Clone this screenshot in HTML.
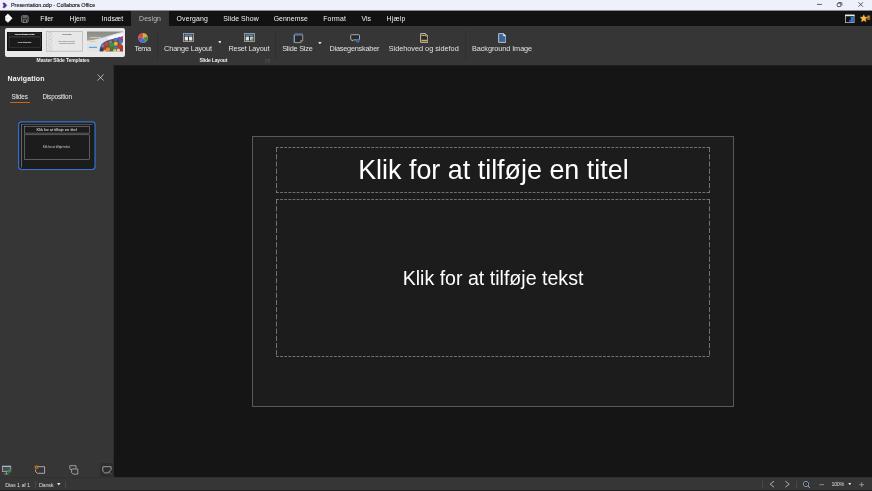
<!DOCTYPE html>
<html lang="da">
<head>
<meta charset="utf-8">
<title>Presentation.odp - Collabora Office</title>
<style>
*{box-sizing:border-box;margin:0;padding:0}
html,body{width:872px;height:491px;overflow:hidden;background:#151515;font-family:"Liberation Sans","DejaVu Sans",sans-serif;color:#e8e8e8}
.abs{position:absolute}
.t{position:absolute;white-space:nowrap;line-height:1em}
#titlebar{left:0;top:0;width:872px;height:11px;background:linear-gradient(180deg,#eef1fa 0,#eef1fa 10px,#8a8c92 10px,#8a8c92 11px)}
#menubar{left:0;top:11px;width:872px;height:15px;background:#121212}
#tabact{left:131px;top:11px;width:38px;height:15px;background:#363636}
#ribbon{left:0;top:26px;width:872px;height:39px;background:#363636}
.sep{position:absolute;top:5px;width:1px;height:29px;background:#2f2f2f}
#sidebar{left:0;top:65px;width:114px;height:412px;background:linear-gradient(90deg,#363636 0,#363636 113px,#2e2e2e 113px)}
#wsline{left:114px;top:65px;width:758px;height:1px;background:#1f1f1f}
#status{left:0;top:477px;width:872px;height:14px;background:linear-gradient(180deg,#313131 0,#313131 1px,#363636 1px,#363636 13px,#212121 13px)}
#slide{left:252px;top:136px;width:482px;height:271px;background:#1c1c1c;border:1px solid #595959}
.ph{position:absolute;display:flex;align-items:center;justify-content:center;color:#fff;white-space:nowrap;will-change:transform}
.vs{position:absolute;top:4px;width:1px;height:7px;background:#484848}
</style>
</head>
<body>
<div id="titlebar" class="abs">
  <svg class="abs" style="left:2px;top:1.5px" width="6" height="7" viewBox="2 1.5 6 7"><path d="M2.9 2.6 L4.6 2.4 L6.8 4.9 L4.6 7.3 L2.9 7.1 L3.9 4.9 Z" fill="#5b2488" stroke="#5b2488" stroke-width="0.5" stroke-linejoin="round"/></svg>
  <svg class="abs" style="left:810px;top:0" width="62" height="11" viewBox="0 0 62 11">
    <path d="M7 4.4 H12" stroke="#222" stroke-width="0.7" fill="none"/>
    <rect x="27.2" y="3.2" width="3.6" height="3.4" rx="0.8" stroke="#222" stroke-width="0.7" fill="none"/>
    <path d="M28.4 2.5 H31 Q31.9 2.5 31.9 3.4 V5.6" stroke="#222" stroke-width="0.7" fill="none"/>
    <path d="M48.4 2.2 L53 6.8 M53 2.2 L48.4 6.8" stroke="#222" stroke-width="0.7" fill="none"/>
  </svg>
</div>

<div id="menubar" class="abs">
  <svg class="abs" style="left:4px;top:2px" width="10" height="11" viewBox="4 13 10 11"><path d="M5.5 16.3 L7.9 14.1 L12.1 18.2 L8.1 22.3 L5.7 20.4 Z" fill="#fff" stroke="#fff" stroke-width="0.7" stroke-linejoin="round"/><path d="M6.6 17.2 L7.7 18.2 L6.6 19.2Z" fill="#b8b8b8"/></svg>
  <svg class="abs" style="left:21px;top:3.5px" width="8" height="8" viewBox="0 0 8 8"><rect x="0.7" y="0.8" width="6.4" height="6.4" rx="0.7" fill="#242424" stroke="#8e8e8e" stroke-width="0.9"/><rect x="1.9" y="1.2" width="4" height="1.9" fill="#6c6c6c"/><rect x="2.3" y="4.8" width="3.2" height="2.4" fill="#1a1a1a" stroke="#8e8e8e" stroke-width="0.7"/></svg>
  <svg class="abs" style="left:844px;top:2.5px" width="28" height="10" viewBox="0 0 28 10">
    <rect x="1.5" y="1.1" width="8.6" height="7.5" fill="#10141b" stroke="#bcbcbc" stroke-width="0.8"/><rect x="1.1" y="0.7" width="9.4" height="1.5" fill="#ebebeb"/><rect x="6.6" y="2.9" width="3.1" height="5.2" fill="#3577d2"/><rect x="5" y="6" width="1.8" height="1.6" fill="#2f66b4"/>
    <path d="M19.8 0.7 L20.9 3 L23.5 3.3 L21.6 5.1 L22.1 7.7 L19.8 6.4 L17.5 7.7 L18 5.1 L16.1 3.3 L18.7 3Z" fill="#f6b84a" stroke="#f1a93a" stroke-width="0.4"/>
    <rect x="23" y="1.4" width="3.2" height="4.6" fill="#8f5e22"/><rect x="23.6" y="2.4" width="1.6" height="1.2" fill="#d9a355"/>
  </svg>
</div>
<div id="tabact" class="abs"></div>

<div id="ribbon" class="abs">
  <div class="abs" style="left:4.5px;top:2px;width:120.5px;height:29px;background:#e9e9e9;border-radius:2px"></div>
  <!-- thumb 1 -->
  <div class="abs" style="left:7px;top:6px;width:35px;height:19px;background:#1a1a1a;border:1px solid #101010"></div>
  <svg class="abs" style="left:7px;top:6px;will-change:transform" width="35" height="19" viewBox="7 32 35 19">
    <g fill="none" stroke="#505050" stroke-width="0.4"><rect x="9.1" y="33" width="31.3" height="3.6"/><rect x="9.1" y="37.1" width="31.3" height="10.2"/></g>
    <text x="24.7" y="35.2" text-anchor="middle" font-size="1.97" fill="#ffffff" stroke="#fff" stroke-width="0.08">Klik for at tilføje en titel</text>
    <text x="24.5" y="42.5" text-anchor="middle" font-size="1.45" fill="#e8e8e8" stroke="#e8e8e8" stroke-width="0.05">Klik for at tilføje tekst</text>
  </svg>
  <!-- thumb 2 -->
  <svg class="abs" style="left:46px;top:5px;will-change:transform" width="37" height="21" viewBox="46 31 37 21">
    <rect x="46.6" y="31.6" width="35.9" height="19.6" fill="#e7e7e7" stroke="#b4b4b4" stroke-width="0.7"/>
    <path d="M48.2 32 Q54.2 33.8 50.1 35.6 Q46 37.4 50.1 39.2 Q54.2 41 50.1 42.8 Q46 44.6 50.1 46.4 Q54.2 48.2 50.1 50 L49.3 50.9" fill="none" stroke="#dcae94" stroke-width="0.5"/>
    <path d="M52 32 Q46 33.8 50.1 35.6 Q54.2 37.4 50.1 39.2 Q46 41 50.1 42.8 Q54.2 44.6 50.1 46.4 Q46 48.2 50.1 50 L50.9 50.9" fill="none" stroke="#b4cbd8" stroke-width="0.5"/>
    <text x="67" y="34.8" text-anchor="middle" font-size="1.45" fill="#3a3a3a" font-weight="bold">Lorem Ipsum</text>
    <text x="66.75" y="41.95" text-anchor="middle" font-size="1.36" fill="#4a4a4a">Lorem ipsum dolor sit amet,</text>
    <text x="67" y="43.85" text-anchor="middle" font-size="1.36" fill="#4a4a4a">consectetur adipiscing elit</text>
  </svg>
  <!-- thumb 3 -->
  <svg class="abs" style="left:87px;top:5px" width="36" height="21" viewBox="0 -0.4 36 21">
    <defs><linearGradient id="g3" x1="0" y1="0" x2="0" y2="1"><stop offset="0" stop-color="#85867c"/><stop offset="0.5" stop-color="#a4a6a0"/><stop offset="1" stop-color="#b9bcb8"/></linearGradient>
    <clipPath id="c3"><rect x="0" y="0" width="36" height="20"/></clipPath>
    <filter id="b3" x="-5%" y="-5%" width="110%" height="110%"><feGaussianBlur stdDeviation="0.35"/></filter></defs>
    <g clip-path="url(#c3)"><g filter="url(#b3)">
    <rect x="-1" y="-1" width="38" height="22" fill="url(#g3)"/>
    <path d="M-1 9.4 Q6 9 12.3 7.2 Q18 5.6 22.5 4.2 Q29 2 37 0.2 V21 H-1Z" fill="#dfe4e7"/>
    <path d="M20 6 Q28 3.4 37 1.4 V5 Q28 6.6 22 8.6Z" fill="#f6f8f9"/>
    <path d="M12.6 21 Q12.2 15 15.5 11.8 Q19 8.9 22.5 8.3 Q29 6.5 37 4.6 V21Z" fill="#3e5fa8"/>
    <path d="M13.6 21 Q13.4 15.4 16.2 12.6 Q19.4 9.8 22.8 9.1 Q29 7.4 37 5.5 V21Z" fill="#7a4a3a"/>
    <g>
      <circle cx="16" cy="14.5" r="1.6" fill="#7a7fb8"/><circle cx="14.8" cy="18.3" r="1.7" fill="#2b3a6a"/>
      <circle cx="19.6" cy="12.6" r="1.9" fill="#c8483a"/><circle cx="17.6" cy="16.4" r="1.6" fill="#b03a3a"/>
      <circle cx="23.4" cy="10.6" r="1.6" fill="#a06ab8"/><circle cx="28.6" cy="8.4" r="2" fill="#3f78c8"/><circle cx="32.6" cy="7.2" r="1.9" fill="#8a4fb0"/><circle cx="35.6" cy="6.4" r="1.4" fill="#c84a6a"/>
      <circle cx="24.6" cy="13.6" r="2.6" fill="#2f9a34"/><circle cx="28.8" cy="12.4" r="2" fill="#e0b83a"/><circle cx="33.8" cy="10.4" r="2.1" fill="#3f78c8"/>
      <circle cx="21" cy="18" r="2.2" fill="#e8862a"/><circle cx="25.6" cy="17.6" r="1.6" fill="#2f8a34"/><circle cx="28.6" cy="16.4" r="1.8" fill="#3f78c8"/>
      <circle cx="32.8" cy="14.8" r="2.2" fill="#c8382e"/><circle cx="35.8" cy="12.6" r="1.4" fill="#e8e0d8"/>
      <circle cx="27.8" cy="19.4" r="1.8" fill="#e0c03a"/><circle cx="31.4" cy="18.8" r="1.6" fill="#d8d0c8"/><circle cx="35" cy="18" r="2" fill="#b8322e"/>
      <circle cx="17.8" cy="19.8" r="1.4" fill="#e0b83a"/><circle cx="23.6" cy="20" r="1.2" fill="#3a5fb0"/>
    </g>
    <text x="2.9" y="6.5" font-size="2.5" font-weight="bold" fill="#f4f4f4">Lorem ip</text>
    <text x="3.2" y="10.2" font-size="2.1" font-weight="bold" fill="#eda63e">Dolor</text>
    <rect x="2" y="15.4" width="8" height="1" fill="#3f9ad6"/>
    </g></g>
  </svg>

  <!-- Tema -->
  <svg class="abs" style="left:138.2px;top:7.4px" width="10" height="10" viewBox="-5.2 -5.2 10.4 10.4">
    <g stroke="#cfc6bc" stroke-width="0.3">
    <path d="M0 0 L0 -5 A5 5 0 0 1 4.76 -1.55Z" fill="#f2a02c"/>
    <path d="M0 0 L4.76 -1.55 A5 5 0 0 1 2.94 4.05Z" fill="#3f8f3c"/>
    <path d="M0 0 L2.94 4.05 A5 5 0 0 1 -2.94 4.05Z" fill="#2f70cc"/>
    <path d="M0 0 L-2.94 4.05 A5 5 0 0 1 -4.76 -1.55Z" fill="#8e42ac"/>
    <path d="M0 0 L-4.76 -1.55 A5 5 0 0 1 0 -5Z" fill="#dc4420"/>
    </g>
  </svg>
  <div class="sep" style="left:157px"></div>

  <!-- Change Layout -->
  <svg class="abs" style="left:183px;top:7px" width="11" height="9" viewBox="0 0 11 9"><rect x="0.5" y="0.5" width="10" height="8" fill="#2c2c2c" stroke="#b0b0b0" stroke-width="0.8"/><rect x="1.5" y="1.5" width="8" height="1.3" fill="#5a9be0"/><rect x="1.7" y="3.6" width="3.3" height="3.9" fill="#e6e6e6"/><rect x="6" y="3.6" width="3.3" height="3.9" fill="#e6e6e6"/></svg>
  <svg class="abs" style="left:217.6px;top:15px" width="3.8" height="2.6" viewBox="0 0 4 3"><path d="M0 0 H4 L2 2.8Z" fill="#e6e6e6"/></svg>
  <!-- Reset Layout -->
  <svg class="abs" style="left:244px;top:7px" width="11" height="9" viewBox="0 0 11 9"><rect x="0.5" y="0.5" width="10" height="8" fill="#2c2c2c" stroke="#b0b0b0" stroke-width="0.8"/><rect x="1.5" y="1.5" width="8" height="1.3" fill="#5a9be0"/><rect x="1.7" y="3.6" width="3.3" height="3.9" fill="#dcdcdc"/><rect x="6" y="3.6" width="3.3" height="3.9" fill="#c8c8c8"/><rect x="7.4" y="5.4" width="1.4" height="1.6" fill="#3f9a48"/></svg>
  <svg class="abs" style="left:265px;top:32.5px" width="5" height="4.5" viewBox="0 0 5 4.5"><path d="M0.4 0.4 H4.6 V4.1 H0.4Z M1.8 3 L3.6 1.2 M2.4 1.2 H3.6 V2.4" fill="none" stroke="#585858" stroke-width="0.5"/></svg>
  <div class="sep" style="left:275px"></div>

  <!-- Slide Size -->
  <svg class="abs" style="left:292px;top:6px" width="12" height="12" viewBox="292 32 12 12"><path d="M294.5 34.9 H302.7 V40.6 L300.6 42.6 H294.5Z" fill="#2a2a2a" stroke="#b4b4b4" stroke-width="0.8"/><path d="M300.6 42.6 V40.6 H302.7" fill="none" stroke="#b4b4b4" stroke-width="0.6"/><path d="M294.4 33.4 H303.1 M293.4 34.6 V42.8" fill="none" stroke="#3f86e0" stroke-width="0.6"/></svg>
  <svg class="abs" style="left:317.8px;top:15.6px" width="3.8" height="2.6" viewBox="0 0 4 3"><path d="M0 0 H4 L2 2.8Z" fill="#e6e6e6"/></svg>
  <!-- Diasegenskaber -->
  <svg class="abs" style="left:350px;top:8px" width="10.4" height="9" viewBox="0 0 10.4 9"><path d="M1.4 0.7 H8.8 Q9.5 0.7 9.5 1.4 V5.2 Q9.5 5.9 8.8 5.9 H3.6 L2.2 7 V5.9 H1.4 Q0.7 5.9 0.7 5.2 V1.4 Q0.7 0.7 1.4 0.7Z" fill="#2a2a2a" stroke="#b8b8b8" stroke-width="0.9"/><circle cx="7.7" cy="6.8" r="1.9" fill="#3873ba"/><circle cx="7.7" cy="6.8" r="0.6" fill="#2a4f80"/></svg>
  <!-- Sidehoved og sidefod -->
  <svg class="abs" style="left:420px;top:7px" width="8.4" height="10" viewBox="0 0 8.4 10"><path d="M0.6 0.6 H5.4 L7.8 3 V9.4 H0.6Z" fill="#2a2a2a" stroke="#dedede" stroke-width="0.8"/><path d="M5.4 0.6 V3 H7.8" fill="none" stroke="#dedede" stroke-width="0.6"/><rect x="1.4" y="1.8" width="3.4" height="1.2" fill="#e8a838"/><rect x="1.4" y="6.8" width="5.6" height="1.5" fill="#e8a838"/></svg>
  <div class="sep" style="left:465px"></div>
  <!-- Background Image -->
  <svg class="abs" style="left:498px;top:7px" width="8.4" height="10" viewBox="0 0 8.4 10"><path d="M0.6 0.6 H5.4 L7.8 3 V9.4 H0.6Z" fill="#38659a" stroke="#d4d8de" stroke-width="0.8"/><path d="M5.4 0.6 V3 H7.8Z" fill="#dfe6ee" stroke="#e4e8ee" stroke-width="0.4"/></svg>
</div>

<div id="sidebar" class="abs">
  <svg class="abs" style="left:96.9px;top:9.1px" width="7.2" height="7" viewBox="0 0 7 7"><path d="M0.4 0.4 L6.6 6.6 M6.6 0.4 L0.4 6.6" stroke="#e6e6e6" stroke-width="0.7" fill="none"/></svg>
  <div class="abs" style="left:10px;top:37px;width:20px;height:1px;background:#c8651a"></div>
  <svg class="abs" style="left:17px;top:55px" width="80" height="52" viewBox="17 120 80 52">
    <rect x="18.65" y="121.8" width="76.4" height="47.7" rx="3" fill="#1c1c1c" stroke="#3474d4" stroke-width="1.15"/>
    <path d="M21.5 124 V167.5" stroke="#7a7a7a" stroke-width="0.8" fill="none"/>
    <path d="M21 124.4 H92.6" stroke="#6a6a6a" stroke-width="0.7" fill="none"/>
    <rect x="24.5" y="126.3" width="65.2" height="6.8" fill="none" stroke="#9a9a9a" stroke-width="0.5"/>
    <rect x="24.5" y="134.8" width="65.2" height="24.6" fill="none" stroke="#9a9a9a" stroke-width="0.5"/>
  </svg>
  <!-- bottom icons -->
  <svg class="abs" style="left:0;top:397px" width="114" height="15" viewBox="0 462 114 15">
    <rect x="100.3" y="463.2" width="13.7" height="13.4" fill="#2d2d2d"/>
    <g fill="none" stroke="#a8a8a8" stroke-width="0.9">
      <rect x="2.5" y="466.4" width="8.2" height="5" fill="#4a4d52"/>
      <path d="M4.2 474 H8.6 M6.4 471.4 V474" stroke-width="0.8"/>
      <path d="M2.1 466.2 H11.1" stroke="#a8d0f2" stroke-width="0.8"/>
      <path d="M37.8 466.7 H44.6 V473.3 H37.4 L35.6 471.8 V469.4" stroke-width="1"/>
      <path d="M76 468.8 V465.7 H69.8 V468.9 L71.5 470.3"/>
      <path d="M71.6 469 H77.8 V474.1 H73.2 L71.6 472.7Z" fill="#363636"/>
      <path d="M102.8 466.7 H111.1 V469.6 L108 472.9 H104.6 L102.8 471.2Z" fill="#2d2d2d"/>
      <path d="M108.6 471.6 L111.4 474.2" stroke="#7a7a7a" stroke-width="0.8"/>
    </g>
    <circle cx="9.3" cy="471.1" r="2" fill="#2f8038"/><circle cx="9.3" cy="471.1" r="0.7" fill="#4fae58"/>
    <circle cx="36.4" cy="467.2" r="1.35" fill="#7a4a1c" stroke="#e8862a" stroke-width="0.9"/>
    <path d="M36.4 464.9 V465.5 M34.3 465.6 L34.8 466 M38.5 465.6 L38 466 M38.6 468.8 L38.1 468.4" stroke="#c9772a" stroke-width="0.4" fill="none"/>
  </svg>
</div>
<div id="wsline" class="abs"></div>

<div id="slide" class="abs">
  <div class="ph" style="left:23px;top:10px;width:434px;height:46px;font-size:26.9px;padding-left:0.8px">Klik for at tilføje en titel</div>
  <div class="ph" style="left:23px;top:62px;width:434px;height:158px;font-size:19.6px">Klik for at tilføje tekst</div>
</div>
<svg class="abs" style="left:0;top:0" width="872" height="491" viewBox="0 0 872 491">
  <g fill="none" stroke="#7c7c7c" stroke-width="0.9">
    <path d="M276 147.5 H710 M276 192.5 H710 M276 199.5 H710 M276 356.5 H710" stroke-dasharray="2.8 1.34"/>
    <path d="M276.5 147 V193 M709.5 147 V193 M276.5 199 V357 M709.5 199 V357" stroke-dasharray="5.2 2"/>
  </g>
</svg>

<div id="status" class="abs">
  <div class="vs" style="left:35px"></div>
  <svg class="abs" style="left:57px;top:6.2px" width="3.6" height="2.6" viewBox="0 0 4 3"><path d="M0 0 H4 L2 2.8Z" fill="#e6e6e6"/></svg>
  <div class="vs" style="left:65px"></div>
  <div class="vs" style="left:762px"></div>
  <svg class="abs" style="left:768px;top:3px" width="24" height="8" viewBox="0 0 24 8"><path d="M6 1.2 L2.2 4.2 L6 7.2 M17.4 1.2 L21.2 4.2 L17.4 7.2" fill="none" stroke="#d8d8d8" stroke-width="0.75"/></svg>
  <div class="vs" style="left:796px"></div>
  <svg class="abs" style="left:803px;top:4px" width="7.4" height="7.4" viewBox="0 0 7.4 7.4"><circle cx="3" cy="3" r="2.6" fill="#0a0f1c" stroke="#d0d0d0" stroke-width="0.7"/><path d="M5 5 L6.8 6.8" stroke="#c4c4c4" stroke-width="0.9"/><rect x="2.4" y="1.8" width="1.2" height="2.4" fill="#3f78c8"/></svg>
  <svg class="abs" style="left:818.6px;top:4.6px" width="5.4" height="5.4" viewBox="0 0 5.4 5.4"><path d="M0.3 2.7 H5.1" stroke="#b4b4b4" stroke-width="0.7" fill="none"/></svg>
  <svg class="abs" style="left:847.6px;top:6px" width="3.6" height="2.4" viewBox="0 0 4 3"><path d="M0 0 H4 L2 2.8Z" fill="#e6e6e6"/></svg>
  <svg class="abs" style="left:859px;top:4.6px" width="5.4" height="5.4" viewBox="0 0 5.4 5.4"><path d="M0.2 2.7 H5.2 M2.7 0.2 V5.2" stroke="#b4b4b4" stroke-width="0.7" fill="none"/></svg>
</div>
<span class="t" style="left:10.70px;top:3.24px;font-size:5.5px;letter-spacing:-0.046px;color:#161616;-webkit-text-stroke:0.12px #161616;will-change:transform">Presentation.odp - Collabora Office</span>
<span class="t" style="left:40.30px;top:16.06px;font-size:6.9px;letter-spacing:-0.127px;color:#f2f2f2">Filer</span>
<span class="t" style="left:69.45px;top:16.06px;font-size:6.9px;letter-spacing:0.052px;color:#f2f2f2">Hjem</span>
<span class="t" style="left:101.60px;top:16.06px;font-size:6.9px;letter-spacing:0.104px;color:#f2f2f2">Indsæt</span>
<span class="t" style="left:139.10px;top:16.06px;font-size:6.9px;letter-spacing:0.079px;color:#bdbdbd">Design</span>
<span class="t" style="left:176.60px;top:16.06px;font-size:6.9px;letter-spacing:0.133px;color:#f2f2f2">Overgang</span>
<span class="t" style="left:223.20px;top:16.06px;font-size:6.9px;letter-spacing:0.113px;color:#f2f2f2">Slide Show</span>
<span class="t" style="left:273.70px;top:16.06px;font-size:6.9px;letter-spacing:0.054px;color:#f2f2f2">Gennemse</span>
<span class="t" style="left:323.20px;top:16.06px;font-size:6.9px;letter-spacing:0.184px;color:#f2f2f2">Format</span>
<span class="t" style="left:361.60px;top:16.06px;font-size:6.9px;letter-spacing:-0.052px;color:#f2f2f2">Vis</span>
<span class="t" style="left:386.60px;top:16.06px;font-size:6.9px;letter-spacing:0.175px;color:#f2f2f2">Hjælp</span>
<span class="t" style="left:134.45px;top:44.82px;font-size:7.3px;letter-spacing:-0.448px;color:#e2e2e2">Tema</span>
<span class="t" style="left:164.10px;top:44.82px;font-size:7.3px;letter-spacing:-0.138px;color:#e2e2e2">Change Layout</span>
<span class="t" style="left:228.45px;top:44.82px;font-size:7.3px;letter-spacing:-0.182px;color:#e2e2e2">Reset Layout</span>
<span class="t" style="left:282.20px;top:44.82px;font-size:7.3px;letter-spacing:-0.206px;color:#e2e2e2">Slide Size</span>
<span class="t" style="left:329.45px;top:44.82px;font-size:7.3px;letter-spacing:-0.21px;color:#e2e2e2">Diasegenskaber</span>
<span class="t" style="left:388.70px;top:44.82px;font-size:7.3px;letter-spacing:-0.01px;color:#e2e2e2">Sidehoved og sidefod</span>
<span class="t" style="left:471.95px;top:44.82px;font-size:7.3px;letter-spacing:-0.068px;color:#e2e2e2">Background Image</span>
<span class="t" style="left:36.60px;top:57.77px;font-size:5.0px;letter-spacing:-0.113px;color:#ededed;font-weight:700">Master Slide Templates</span>
<span class="t" style="left:199.45px;top:57.77px;font-size:5.0px;letter-spacing:-0.158px;color:#ededed;font-weight:700">Slide Layout</span>
<span class="t" style="left:7.45px;top:75.07px;font-size:7.0px;letter-spacing:0.134px;color:#f4f4f4;font-weight:700">Navigation</span>
<span class="t" style="left:11.60px;top:94.42px;font-size:6.3px;letter-spacing:-0.191px;color:#f0f0f0">Slides</span>
<span class="t" style="left:42.45px;top:94.42px;font-size:6.3px;letter-spacing:-0.131px;color:#f0f0f0">Disposition</span>
<span class="t" style="left:36.60px;top:127.77px;font-size:4.05px;letter-spacing:-0.027px;color:#efefef">Klik for at tilføje en titel</span>
<span class="t" style="left:42.80px;top:146.49px;font-size:2.96px;letter-spacing:-0.015px;color:#d8d8d8">Klik for at tilføje tekst</span>
<span class="t" style="left:5.20px;top:483.24px;font-size:5.5px;letter-spacing:-0.13px;color:#d4dae4">Dias 1 af 1</span>
<span class="t" style="left:38.90px;top:483.24px;font-size:5.5px;letter-spacing:-0.273px;color:#d4dae4">Dansk</span>
<span class="t" style="left:831.50px;top:481.73px;font-size:5.4px;letter-spacing:-0.366px;color:#d4dae4">100%</span>
</body>
</html>
